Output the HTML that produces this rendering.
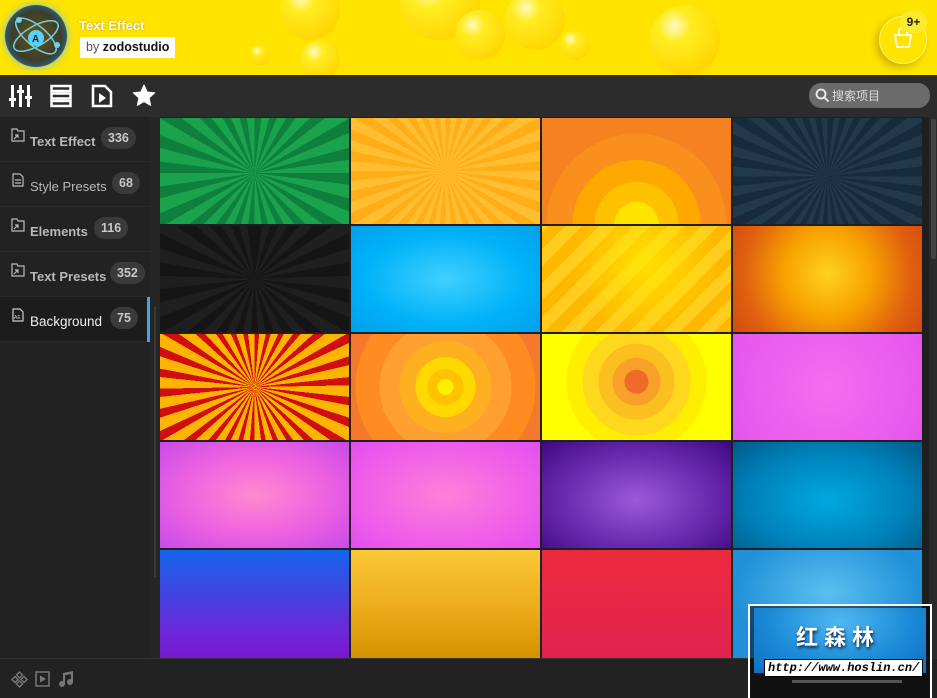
<!DOCTYPE html>
<html><head><meta charset="utf-8"><style>
*{margin:0;padding:0;box-sizing:border-box}
body{width:937px;height:698px;overflow:hidden;background:#1f1f1f;font-family:"Liberation Sans","Noto Sans CJK SC",sans-serif;position:relative}
.hdr{position:absolute;left:0;top:0;width:937px;height:75px;background:#ffe400;overflow:hidden}
.ball{position:absolute;border-radius:50%;background:radial-gradient(circle at 35% 30%,#fffbc0 0,#ffec20 25%,#ffd400 80%)}
.logo{position:absolute;left:5px;top:5px;width:62px;height:62px;border-radius:50%;background:radial-gradient(circle,#6a5a10 0,#3c3c2c 55%,#2a6a90 80%,#4cc0ff 100%);box-shadow:0 0 8px #60c0ff}
.tb{position:absolute;left:0;top:75px;width:937px;height:42px;background:#2c2c2c}
.side{position:absolute;left:0;top:117px;width:150px;height:541px;background:#222}
.item{height:45px;border-bottom:1px solid #2a2a2a;position:relative;color:#b8b8b8;font-size:13px}
.item span.t{position:absolute;left:30px;top:17px}
.item .b{position:absolute;top:10px;height:22px;border-radius:11px;background:#3a3a3a;color:#c8c8c8;font-weight:bold;font-size:12.5px;line-height:22px;padding:0 7px}
.item svg{position:absolute;left:11px;top:11px}
.gap{position:absolute;left:150px;top:117px;width:10px;height:541px;background:#262626}
.grid{position:absolute;left:160px;top:118px;width:763px}
.tile{position:absolute;width:189px;height:106px}
.sb{position:absolute;left:929px;top:117px;width:8px;height:541px;background:#2a2a2a}
.bot{position:absolute;left:0;top:658px;width:937px;height:40px;background:#222;border-top:1px solid #333}
</style></head><body>
<div class="hdr">
 <div class="ball" style="left:280px;top:-20px;width:60px;height:60px"></div>
 <div class="ball" style="left:300px;top:40px;width:40px;height:40px"></div>
 <div class="ball" style="left:400px;top:-30px;width:80px;height:70px"></div>
 <div class="ball" style="left:455px;top:10px;width:50px;height:50px"></div>
 <div class="ball" style="left:505px;top:-10px;width:60px;height:60px"></div>
 <div class="ball" style="left:560px;top:30px;width:30px;height:30px"></div>
 <div class="ball" style="left:650px;top:5px;width:70px;height:70px"></div>
 <div class="ball" style="left:250px;top:45px;width:20px;height:20px"></div>
 <div class="logo">
  <svg width="62" height="62" viewBox="0 0 62 62"><g fill="none" stroke="#6fd2e8" stroke-width="1.5"><ellipse cx="31" cy="31" rx="25" ry="10" transform="rotate(-30 31 31)"/><ellipse cx="31" cy="31" rx="25" ry="10" transform="rotate(40 31 31)"/></g><circle cx="31" cy="33" r="8" fill="#5ad0ff"/><text x="27" y="37" font-size="10" font-weight="bold" fill="#123">A</text><circle cx="14" cy="15" r="3" fill="#6fd2e8"/><circle cx="52" cy="40" r="3" fill="#6fd2e8"/></svg>
 </div>
 <div style="position:absolute;left:79px;top:18px;color:#fff;font-weight:bold;font-size:13px;text-shadow:0 0 2px #b90">Text Effect</div>
 <div style="position:absolute;left:80px;top:37px;background:#fff;padding:2px 6px;font-size:12.5px;color:#222;height:21px;line-height:17px"><span style="color:#555">by</span> <b style="font-weight:bold;color:#111">zodostudio</b></div>
 <div style="position:absolute;left:879px;top:16px;width:48px;height:48px;border-radius:50%;background:#ffe400;box-shadow:-3px 3px 8px #c9b000;border:1px solid #fff27a"></div>
 <svg style="position:absolute;left:890px;top:25px" width="26" height="26" viewBox="0 0 26 26"><path d="M5 10h16l-2 12H7z" fill="none" stroke="#fffbd0" stroke-width="2"/><path d="M9 10V6a4 4 0 0 1 8 0v4" fill="none" stroke="#fffbd0" stroke-width="2"/></svg>
 <div style="position:absolute;left:900px;top:11px;width:27px;height:22px;border-radius:11px;background:#ffea30;color:#222;font-size:12px;font-weight:bold;text-align:center;line-height:22px">9+</div>
</div>
<div class="tb">
 <svg style="position:absolute;left:9px;top:9px" width="24" height="24" viewBox="0 0 24 24" fill="#fff"><rect x="2" y="1" width="3" height="22"/><rect x="10" y="1" width="3" height="22"/><rect x="18" y="1" width="3" height="22"/><rect x="0" y="14" width="7" height="3"/><rect x="8" y="6" width="7" height="3"/><rect x="16" y="12" width="7" height="3"/></svg>
 <svg style="position:absolute;left:50px;top:9px" width="22" height="24" viewBox="0 0 22 24" fill="none" stroke="#fff" stroke-width="2.5"><rect x="1.5" y="2" width="19" height="5"/><rect x="1.5" y="9.5" width="19" height="5"/><rect x="1.5" y="17" width="19" height="5"/></svg>
 <svg style="position:absolute;left:91px;top:9px" width="22" height="24" viewBox="0 0 22 24"><path d="M2 2h12l6 6v14H2z" fill="none" stroke="#fff" stroke-width="2.5"/><path d="M8 9l7 5-7 5z" fill="#fff"/></svg>
 <svg style="position:absolute;left:132px;top:9px" width="24" height="24" viewBox="0 0 24 24"><path d="M12 1l3.2 7 7.6.8-5.7 5.1 1.6 7.6L12 17.6l-6.7 3.9 1.6-7.6L1.2 8.8 8.8 8z" fill="#fff" stroke="#fff" stroke-linejoin="round"/></svg>
 <div style="position:absolute;left:809px;top:8px;width:121px;height:25px;border-radius:12px;background:#6b6b6b"></div>
 <svg style="position:absolute;left:815px;top:13px" width="15" height="15" viewBox="0 0 15 15" fill="none" stroke="#eee" stroke-width="1.8"><circle cx="6" cy="6" r="4.5"/><path d="M9.5 9.5l4 4"/></svg>
 <div style="position:absolute;left:832px;top:12px;color:#ddd;font-size:12px">搜索项目</div>
</div>
<div class="side">
 <div class="item"><svg width="14" height="14" viewBox="0 0 14 14" fill="none" stroke="#bbb" stroke-width="1.2"><path d="M1 1h5l1 2h6v10H1z"/><path d="M3 11l4-4M4 7h3v3"/></svg><span class="t" style="font-weight:bold">Text Effect</span><span class="b" style="left:101px">336</span></div>
 <div class="item"><svg width="14" height="14" viewBox="0 0 14 14" fill="none" stroke="#bbb" stroke-width="1.2"><path d="M2 1h7l3 3v9H2z"/><path d="M4 7h6M4 10h6"/></svg><span class="t">Style Presets</span><span class="b" style="left:112px">68</span></div>
 <div class="item"><svg width="14" height="14" viewBox="0 0 14 14" fill="none" stroke="#bbb" stroke-width="1.2"><path d="M1 1h5l1 2h6v10H1z"/><path d="M3 11l4-4M4 7h3v3"/></svg><span class="t" style="font-weight:bold">Elements</span><span class="b" style="left:94px">116</span></div>
 <div class="item"><svg width="14" height="14" viewBox="0 0 14 14" fill="none" stroke="#bbb" stroke-width="1.2"><path d="M1 1h5l1 2h6v10H1z"/><path d="M3 11l4-4M4 7h3v3"/></svg><span class="t" style="font-weight:bold">Text Presets</span><span class="b" style="left:110px">352</span></div>
 <div class="item" style="background:#1c1c1c;color:#eee"><svg width="14" height="14" viewBox="0 0 14 14" fill="none" stroke="#ccc" stroke-width="1.2"><path d="M2 1h7l3 3v9H2z"/><text x="3" y="11" font-size="5" fill="#ccc" stroke="none">AE</text></svg><span class="t" style="font-size:13.5px">Background</span><span class="b" style="left:110px">75</span><div style="position:absolute;left:147px;top:0;width:3px;height:45px;background:#3ea6e8"></div></div>
</div>
<div class="gap"><div style="position:absolute;left:4px;top:190px;width:2px;height:270px;background:#3a3a3a"></div></div>
<div class="grid">
 <div class="tile" style="left:0;top:0;background:repeating-conic-gradient(from 0deg at 50% 52%,#0f7f3c 0 7deg,#1aa34c 7deg 15deg)"></div>
 <div class="tile" style="left:191px;top:0;background:repeating-conic-gradient(from 0deg at 50% 50%,#ffae1a 0 6deg,#ffbf30 6deg 12deg)"></div>
 <div class="tile" style="left:382px;top:0;background:radial-gradient(circle at 50% 100%,#ffe400 0 22px,#ffc200 22px 42px,#ffa800 42px 64px,#f98f1c 64px 90px,#f58220 90px)"></div>
 <div class="tile" style="left:573px;top:0;background:repeating-conic-gradient(from 0deg at 50% 55%,#172b3c 0 6deg,#22394c 6deg 12deg)"></div>
 <div class="tile" style="left:0;top:108px;background:repeating-conic-gradient(from 0deg at 50% 50%,#151515 0 8deg,#1f1f1f 8deg 16deg)"></div>
 <div class="tile" style="left:191px;top:108px;background:radial-gradient(ellipse at 50% 50%,#40d0ff,#00b2f8 60%,#00a0ea)"></div>
 <div class="tile" style="left:382px;top:108px;background:radial-gradient(circle at 55% 35%,rgba(255,240,0,.7),transparent 60%),repeating-linear-gradient(-45deg,#ffb800 0 12px,#ffcc20 12px 24px)"></div>
 <div class="tile" style="left:573px;top:108px;background:radial-gradient(circle at 50% 45%,#ffd21e 0,#f7a000 40%,#e06010 75%,#d44a10)"></div>
 <div class="tile" style="left:0;top:216px;background:repeating-conic-gradient(from 0deg at 50% 50%,#d00d10 0 5deg,#ffb400 5deg 12deg)"></div>
 <div class="tile" style="left:191px;top:216px;background:radial-gradient(circle at 50% 50%,#ffee00 0 8px,#ffc200 8px 18px,#ffd800 18px 30px,#ffb020 30px 46px,#ffa030 46px 66px,#ff8c20 66px 90px,#f6782a 90px)"></div>
 <div class="tile" style="left:382px;top:216px;background:radial-gradient(circle at 50% 45%,#f06a2a 0 12px,#f8a02a 12px 24px,#fbc020 24px 38px,#fdd81c 38px 54px,#ffee00 54px 70px,#ffff00 70px)"></div>
 <div class="tile" style="left:573px;top:216px;background:radial-gradient(circle,#f86cf0,#e455ec)"></div>
 <div class="tile" style="left:0;top:324px;background:radial-gradient(ellipse at 50% 50%,#ff8ad0,#f064e0 50%,#c84ae8)"></div>
 <div class="tile" style="left:191px;top:324px;background:radial-gradient(ellipse at 50% 50%,#ff80d8,#f060e8 60%,#e24ef0)"></div>
 <div class="tile" style="left:382px;top:324px;background:radial-gradient(ellipse at 50% 55%,#9a5ad8,#6a2ab0 55%,#3c0a80)"></div>
 <div class="tile" style="left:573px;top:324px;background:radial-gradient(ellipse at 50% 55%,#00a8e0,#0080b8 60%,#005a8a)"></div>
 <div class="tile" style="left:0;top:432px;height:108px;background:linear-gradient(180deg,#1464ea,#6a28d8 75%,#7a18d0)"></div>
 <div class="tile" style="left:191px;top:432px;height:108px;background:linear-gradient(180deg,#fbc83a,#eaa818 60%,#d49200)"></div>
 <div class="tile" style="left:382px;top:432px;height:108px;background:linear-gradient(180deg,#ec2a3e,#e02450)"></div>
 <div class="tile" style="left:573px;top:432px;height:108px;background:radial-gradient(ellipse at 50% 40%,#5ac0f0,#2090d8 70%)"></div>
</div>
<div class="sb"><div style="position:absolute;left:2px;top:2px;width:5px;height:140px;background:#444;border-radius:2px"></div></div>
<div class="bot">
 <svg style="position:absolute;left:11px;top:12px" width="17" height="17" viewBox="0 0 17 17" fill="none" stroke="#777" stroke-width="1.4"><path d="M8.5 1l3 3-3 3-3-3zM8.5 10l3 3-3 3-3-3zM1 8.5l3-3 3 3-3 3zM10 8.5l3-3 3 3-3 3z"/></svg>
 <svg style="position:absolute;left:35px;top:12px" width="15" height="16" viewBox="0 0 15 16"><rect x="1" y="1" width="13" height="14" fill="none" stroke="#777" stroke-width="1.5"/><path d="M5 4.5l6 3.5-6 3.5z" fill="#777"/></svg>
 <svg style="position:absolute;left:58px;top:12px" width="16" height="16" viewBox="0 0 16 16" fill="#777"><path d="M5 2l10-2v11h-2V3L7 4.2V13H5z"/><circle cx="4" cy="13" r="3"/><circle cx="12" cy="11" r="3"/></svg>
</div>
<div style="position:absolute;left:748px;top:604px;width:184px;height:94px;border:2px solid #fff;border-bottom:none;background:rgba(0,0,0,.5)"></div>
<div style="position:absolute;left:754px;top:608px;width:172px;height:65px;background:radial-gradient(ellipse at 50% 20%,#50b8f0,#1a88d6 60%,#1070c0)"></div>
<div style="position:absolute;left:796px;top:620px;color:#fff;font-size:22px;font-weight:bold;letter-spacing:6px;font-family:'Noto Sans CJK SC',sans-serif;text-shadow:1px 2px 3px #024">红森林</div>
<div style="position:absolute;left:764px;top:659px;width:159px;height:18px;background:#fff;border:1px solid #000;color:#000;font-family:'Liberation Mono',monospace;font-style:italic;font-weight:bold;font-size:12px;line-height:16px;padding-left:3px">http://www.hoslin.cn/</div>
<div style="position:absolute;left:792px;top:680px;width:110px;height:3px;background:#555"></div>
</body></html>
